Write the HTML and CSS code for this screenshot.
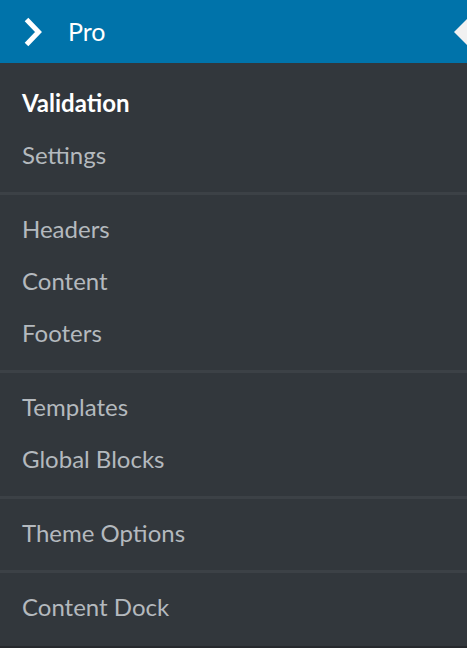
FILE: index.html
```html
<!DOCTYPE html>
<html lang="en">
<head>
<meta charset="utf-8">
<title>Pro menu</title>
<link rel="stylesheet" href="styles.css">
</head>
<body>
<nav class="menu">
  <div class="menu-head">
    <svg class="chevron" width="20" height="30" viewBox="0 0 20 30" aria-hidden="true">
      <polyline points="3.5,2.5 15.5,15 3.5,27.5" fill="none" stroke="#ffffff" stroke-width="5" stroke-linejoin="miter" stroke-linecap="butt"/>
    </svg>
    <span class="head-label">Pro</span>
    <span class="pointer"></span>
  </div>
  <ul class="group group-first">
    <li class="item item-current">Validation</li>
    <li class="item">Settings</li>
  </ul>
  <ul class="group">
    <li class="item">Headers</li>
    <li class="item">Content</li>
    <li class="item">Footers</li>
  </ul>
  <ul class="group">
    <li class="item">Templates</li>
    <li class="item">Global Blocks</li>
  </ul>
  <ul class="group">
    <li class="item">Theme Options</li>
  </ul>
  <ul class="group group-last">
    <li class="item">Content Dock</li>
  </ul>
</nav>
</body>
</html>
```
FILE: styles.css
```css
html, body {
  margin: 0;
  padding: 0;
  background: #32373c;
}

body {
  font-family: Lato, "Liberation Sans", sans-serif;
  height: 648px;
  overflow: hidden;
}

.menu {
  display: flex;
  flex-direction: column;
  background: #32373c;
  min-height: 646px;
  border-bottom: 2px solid #26292d;
}

.menu-head {
  position: relative;
  display: flex;
  align-items: center;
  height: 63px;
  background: #0073aa;
  padding-left: 23px;
}

.chevron {
  display: block;
  margin-top: 0;
}

.head-label {
  margin-left: 25px;
  color: #ffffff;
  font-size: 25px;
  line-height: 63px;
}

.pointer {
  position: absolute;
  right: 0;
  top: 19px;
  width: 0;
  height: 0;
  border-top: 13px solid transparent;
  border-bottom: 13px solid transparent;
  border-right: 13px solid #f1f1f1;
}

.group {
  list-style: none;
  margin: 0;
  padding: 8px 0 11px;
  border-bottom: 3px solid #3c4146;
}

.group-first {
  padding-top: 14px;
}

.group-last {
  border-bottom: none;
  padding-bottom: 13px;
}

.item {
  height: 52px;
  line-height: 52px;
  padding-left: 22px;
  font-size: 24px;
  color: #b4b9be;
  white-space: nowrap;
}

.item-current {
  color: #ffffff;
  font-weight: 700;
}
```
